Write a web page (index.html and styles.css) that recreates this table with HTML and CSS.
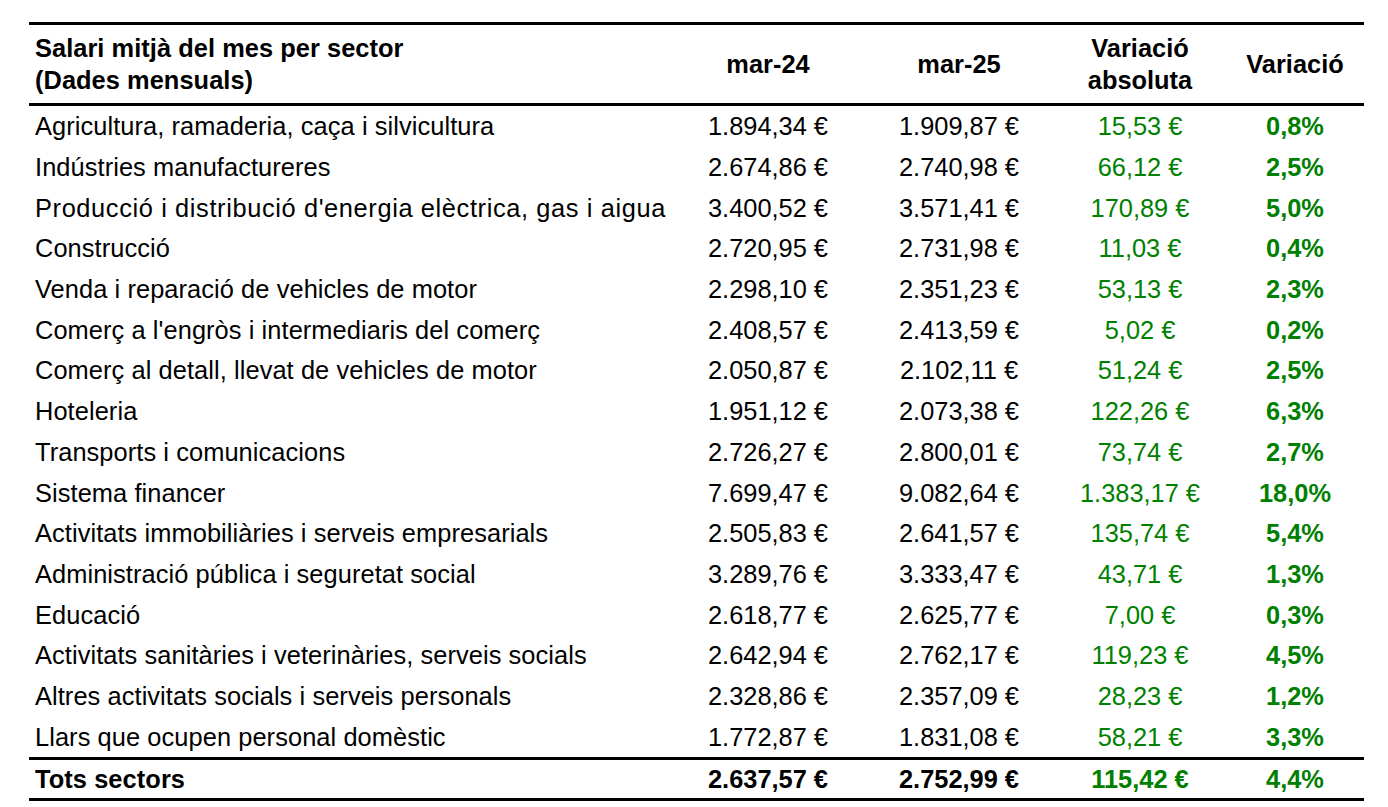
FILE: index.html
```html
<!DOCTYPE html>
<html lang="ca">
<head>
<meta charset="utf-8">
<title>Salari mitjà del mes per sector</title>
<link rel="stylesheet" href="styles.css">
</head>
<body>
<div class="table">
  <div class="row head">
    <div class="label">Salari mitjà del mes per sector<br>(Dades mensuals)</div>
    <div class="num">mar-24</div>
    <div class="num">mar-25</div>
    <div class="num">Variació<br>absoluta</div>
    <div class="num">Variació</div>
  </div>
  <div class="row data"><div class="label">Agricultura, ramaderia, caça i silvicultura</div><div class="num">1.894,34 €</div><div class="num">1.909,87 €</div><div class="num abs">15,53 €</div><div class="num pct">0,8%</div></div>
  <div class="row data"><div class="label">Indústries manufactureres</div><div class="num">2.674,86 €</div><div class="num">2.740,98 €</div><div class="num abs">66,12 €</div><div class="num pct">2,5%</div></div>
  <div class="row data"><div class="label wide">Producció i distribució d'energia elèctrica, gas i aigua</div><div class="num">3.400,52 €</div><div class="num">3.571,41 €</div><div class="num abs">170,89 €</div><div class="num pct">5,0%</div></div>
  <div class="row data"><div class="label">Construcció</div><div class="num">2.720,95 €</div><div class="num">2.731,98 €</div><div class="num abs">11,03 €</div><div class="num pct">0,4%</div></div>
  <div class="row data"><div class="label">Venda i reparació de vehicles de motor</div><div class="num">2.298,10 €</div><div class="num">2.351,23 €</div><div class="num abs">53,13 €</div><div class="num pct">2,3%</div></div>
  <div class="row data"><div class="label">Comerç a l'engròs i intermediaris del comerç</div><div class="num">2.408,57 €</div><div class="num">2.413,59 €</div><div class="num abs">5,02 €</div><div class="num pct">0,2%</div></div>
  <div class="row data"><div class="label">Comerç al detall, llevat de vehicles de motor</div><div class="num">2.050,87 €</div><div class="num">2.102,11 €</div><div class="num abs">51,24 €</div><div class="num pct">2,5%</div></div>
  <div class="row data"><div class="label">Hoteleria</div><div class="num">1.951,12 €</div><div class="num">2.073,38 €</div><div class="num abs">122,26 €</div><div class="num pct">6,3%</div></div>
  <div class="row data"><div class="label">Transports i comunicacions</div><div class="num">2.726,27 €</div><div class="num">2.800,01 €</div><div class="num abs">73,74 €</div><div class="num pct">2,7%</div></div>
  <div class="row data"><div class="label">Sistema financer</div><div class="num">7.699,47 €</div><div class="num">9.082,64 €</div><div class="num abs">1.383,17 €</div><div class="num pct">18,0%</div></div>
  <div class="row data"><div class="label">Activitats immobiliàries i serveis empresarials</div><div class="num">2.505,83 €</div><div class="num">2.641,57 €</div><div class="num abs">135,74 €</div><div class="num pct">5,4%</div></div>
  <div class="row data"><div class="label">Administració pública i seguretat social</div><div class="num">3.289,76 €</div><div class="num">3.333,47 €</div><div class="num abs">43,71 €</div><div class="num pct">1,3%</div></div>
  <div class="row data"><div class="label">Educació</div><div class="num">2.618,77 €</div><div class="num">2.625,77 €</div><div class="num abs">7,00 €</div><div class="num pct">0,3%</div></div>
  <div class="row data"><div class="label">Activitats sanitàries i veterinàries, serveis socials</div><div class="num">2.642,94 €</div><div class="num">2.762,17 €</div><div class="num abs">119,23 €</div><div class="num pct">4,5%</div></div>
  <div class="row data"><div class="label">Altres activitats socials i serveis personals</div><div class="num">2.328,86 €</div><div class="num">2.357,09 €</div><div class="num abs">28,23 €</div><div class="num pct">1,2%</div></div>
  <div class="row data"><div class="label">Llars que ocupen personal domèstic</div><div class="num">1.772,87 €</div><div class="num">1.831,08 €</div><div class="num abs">58,21 €</div><div class="num pct">3,3%</div></div>
  <div class="row total"><div class="label">Tots sectors</div><div class="num">2.637,57 €</div><div class="num">2.752,99 €</div><div class="num abs">115,42 €</div><div class="num pct">4,4%</div></div>
  <p class="note">Nota: Font: elaboració pròpia a partir de dades de “Seguretat Social. Estadístiques” i “Treball i ocupació”</p>
</div>
</body>
</html>
```

FILE: styles.css
```css
html, body {
  margin: 0;
  padding: 0;
  background: #ffffff;
}

body {
  font-family: "Liberation Sans", Arial, sans-serif;
  font-size: 25.4px;
  color: #000000;
}

.table {
  margin: 22px 0 0 29px;
  width: 1335px;
  border-top: 3px solid #000000;
}

.row {
  display: grid;
  grid-template-columns: 643px 192px 190px 172px 138px;
  align-items: center;
}

.label {
  padding-left: 6px;
  white-space: nowrap;
  letter-spacing: 0.08px;
}

.label.wide {
  letter-spacing: 0.62px;
}

.num {
  text-align: center;
  white-space: nowrap;
}

.head {
  height: 78px;
  border-bottom: 3px solid #000000;
  font-weight: bold;
  line-height: 32px;
}

.head .label {
  letter-spacing: 0.05px;
}

.data {
  height: 40.69px;
  line-height: 30px;
}

.total {
  height: 38px;
  line-height: 30px;
  border-top: 3px solid #000000;
  border-bottom: 3px solid #000000;
  font-weight: bold;
}

.abs {
  color: #008000;
}

.pct {
  color: #008000;
  font-weight: bold;
  align-self: stretch;
  display: flex;
  align-items: center;
  justify-content: center;
}

.note {
  margin: 2px 0 0 3px;
  font-size: 22px;
  line-height: 26px;
  white-space: nowrap;
}
```
